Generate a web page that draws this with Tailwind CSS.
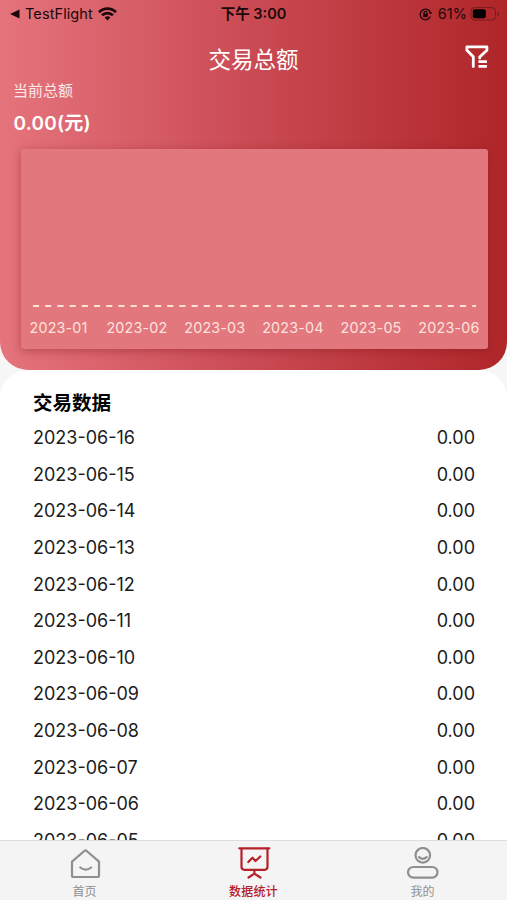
<!DOCTYPE html>
<html lang="zh-CN">
<head>
    <meta charset="UTF-8">
    <meta name="viewport" content="width=device-width, initial-scale=1.0">
    <title>交易总额</title>
    <script src="https://cdn.jsdelivr.net/npm/@tailwindcss/browser@4"></script>
</head>
<body class="bg-[#f6f6f6] font-['Inter','Noto_Sans_CJK_SC',sans-serif]">
    <div class="h-[900px] flex flex-col overflow-hidden">
        <header class="h-[370px] shrink-0 rounded-b-[28px] bg-[linear-gradient(90deg,#e5747d,#ca4a53_50%,#af2629)] text-white">
            <!-- status bar -->
            <div class="h-7 grid grid-cols-3 items-center pl-[9px] pr-[7px] text-[14.5px] text-[#1c080a]">
                <div class="flex items-center">
                    <svg class="w-[11px] h-[10px]" viewBox="0 0 11 10"><path d="M1 5 10.500.5v9z" fill="currentColor"/></svg>
                    <span class="ml-[5px] tracking-[.1px]">TestFlight</span>
                    <svg class="ml-[5px] w-[19px] h-[14px]" viewBox="0 0 19 14" fill="none" stroke="currentColor" stroke-width="2.700"><path d="M1 5.200a12 12 0 0 1 17 0M4 8.300a7.800 7.800 0 0 1 11 0"/><path d="M9.500 13.500 6.600 10.600a4.100 4.100 0 0 1 5.800 0z" fill="currentColor" stroke="none"/></svg>
                </div>
                <div class="text-center font-semibold -ml-[2px]">下午 3:00</div>
                <div class="flex items-center justify-end">
                    <svg class="w-[13px] h-[13px]" viewBox="0 0 13 13" fill="none" stroke="currentColor" stroke-width="1.300"><path d="M11.400 8.500A5.300 5.300 0 1 1 11.700 5.500M10.200 5.200h3M5 6V4.900a1.500 1.500 0 0 1 3 0V6"/><path d="M4.200 5.800h4.600v3.400H4.200z" fill="currentColor" stroke="none"/></svg>
                    <span class="ml-1.5">61%</span>
                    <svg class="ml-[3px] w-[30px] h-[14px]" viewBox="0 0 30 14"><rect x="1" y=".6" width="24.500" height="12.400" rx="3.500" fill="none" stroke="#7a1a1f"/><rect x="2.800" y="2.300" width="13" height="9" rx="2" fill="#000"/><path d="M27.500 4.800c2.200.7 2.200 3.700 0 4.400z" fill="#7a1a1f"/></svg>
                </div>
            </div>
            <div class="h-[50px] grid grid-cols-3 items-center pt-[14px] px-[18px]">
                <h1 class="col-start-2 text-center text-[22.5px] leading-8">交易总额</h1>
                <svg class="justify-self-end -mt-[6px] w-6 h-6" viewBox="0 0 24 24" fill="none" stroke="currentColor" stroke-width="2.800" stroke-linejoin="round" stroke-linecap="round"><path d="M8.300 21.600V11.800L1.900 5.200V1.800h20v3.400L14.700 12v1"/><path d="M13.500 16.600h8.400M13.500 21.300h8.400" stroke-linecap="butt"/></svg>
            </div>
            <p class="mt-[2px] pl-[13px] text-[15px] leading-[22px] text-white/85">当前总额</p>
            <p class="mt-[10px] pl-[13.500px] text-[19px] leading-6 font-semibold tracking-[.2px]">0.00(元)</p>
            <!-- chart -->
            <div class="mt-[13px] ml-[20.5px] mr-[19.5px] h-[200px] rounded-[3px] bg-[#e2777d] shadow-[0_2px_10px_rgba(120,20,30,.4)] flex flex-col justify-end">
                <svg class="ml-3 w-[443px] h-[2px]" viewBox="0 0 443 2"><path d="M0 1h443" stroke="#fde0d6" stroke-width="2" stroke-dasharray="6.100 6.100"/></svg>
                <div class="mt-[11px] mb-[11px] ml-[9px] mr-2 flex text-[14.300px] tracking-[.2px] leading-5 text-[#fde3dd] justify-between">
                    <span class="mr-[2px]">2023-01</span><span>2023-02</span><span>2023-03</span><span>2023-04</span><span>2023-05</span><span>2023-06</span>
                </div>
            </div>
        </header>

        <main class="flex-1 min-h-0 overflow-hidden rounded-t-[28px] bg-white pl-[33px] pr-8 text-[18px] text-[#1b1b1b]">
            <h2 class="mt-[16.500px] text-[19.500px] leading-8 font-bold text-black">交易数据</h2>
            <div id="list" class="pt-[.7px]"></div>
        </main>

        <nav class="h-[60px] shrink-0 grid grid-cols-3 border-t border-[#dedede] bg-[#f4f4f4] text-[12px] leading-4 text-[#8f8f8f]">
            <div class="flex flex-col items-center pt-[6px]">
                <svg class="w-9 h-9" viewBox="0 0 36 36" fill="none" stroke="currentColor" stroke-width="2.200" stroke-linejoin="round" stroke-linecap="round"><path d="M5 14.700 17.300 4q1.200-1 2.400 0L32 14.700V28.500q0 1.500-1.500 1.500H6.500Q5 30 5 28.500zM13.300 20.500q5.400 4.200 10.800 0"/></svg>
                <span class="mt-px">首页</span>
            </div>
            <div class="flex flex-col items-center pt-[6px] text-[#b5202b]">
                <svg class="w-9 h-9" viewBox="0 0 36 36" fill="none" stroke="currentColor" stroke-width="2.200" stroke-linejoin="round" stroke-linecap="round"><path d="M3.300 1.300h30M5.500 1.300v18.500q0 3 3 3h20q3 0 3-3V1.300M18.400 22.800v3.800M18.400 26.600 12.500 30.500M18.400 26.600 24.500 30.500M12.300 15 16.500 10.700 19.500 14 24.300 9.500"/></svg>
                <span class="mt-px font-medium tracking-[.2px]">数据统计</span>
            </div>
            <div class="flex flex-col items-center pt-[6px]">
                <svg class="w-9 h-9" viewBox="0 0 36 36" fill="none" stroke="currentColor" stroke-width="2.200" stroke-linecap="round"><circle cx="17.800" cy="8.300" r="7.300"/><path d="M14 10.100q3.800 3.500 7.600 0"/><rect x="3" y="20" width="29.500" height="10.600" rx="5.300"/></svg>
                <span class="mt-px">我的</span>
            </div>
        </nav>
    </div>
    <script>
        let list = document.querySelector('#list')
        for(let day = 16; day > 4; day--){
            let row = document.createElement('div')
            row.className = 'h-[36.65px] flex items-center justify-between'
            row.innerHTML = `<span>2023-06-${String(day).padStart(2, '0')}</span><span>0.00</span>`
            list.appendChild(row)
        }
    </script>
</body>
</html>
